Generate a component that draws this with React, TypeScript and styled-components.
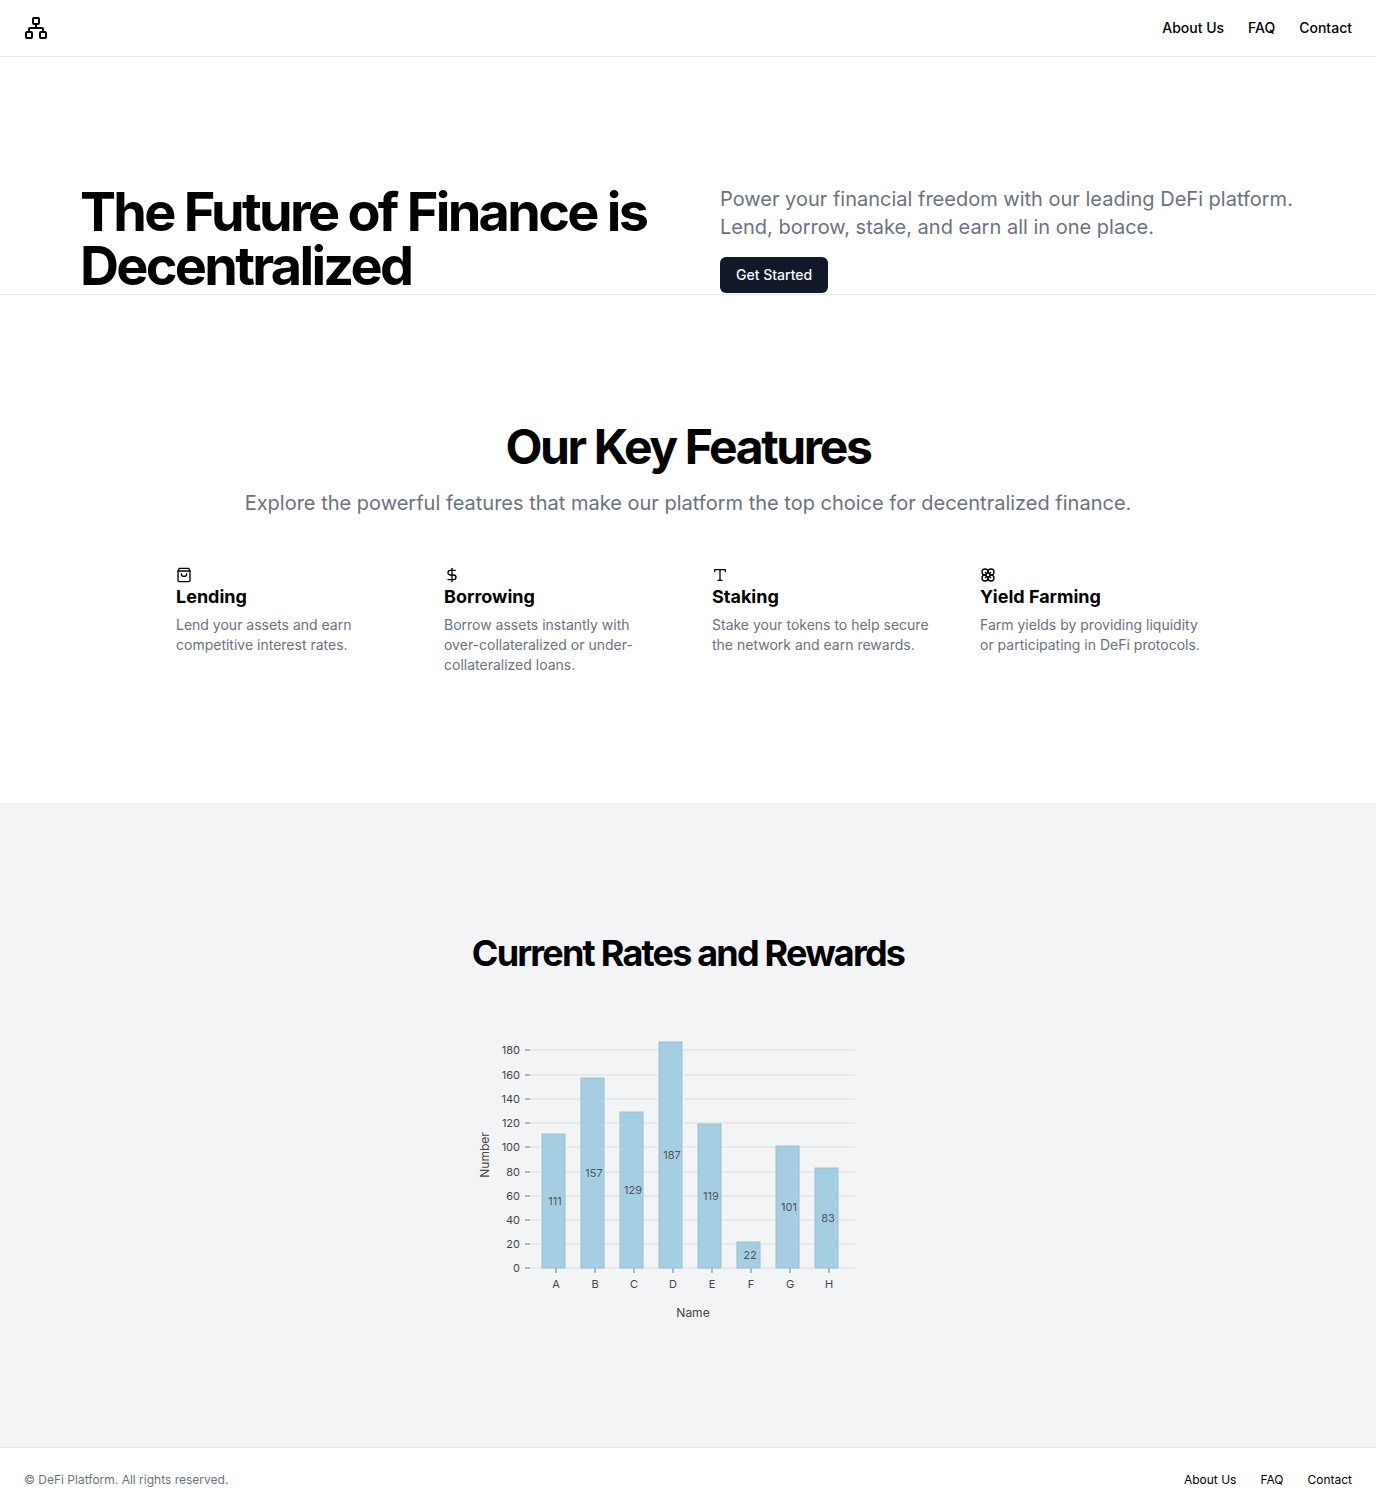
import React from "react";
import styled, { createGlobalStyle } from "styled-components";
import { DollarSign, Flower, Network, Type } from "lucide-react";

const GlobalStyle = createGlobalStyle`
  *, *::before, *::after { box-sizing: border-box; }
  body {
    margin: 0;
    background: #ffffff;
    color: #000000;
    font-family: Inter, "Liberation Sans", sans-serif;
    font-size: 16px;
    line-height: 24px;
  }
  h1, h2, h3, p, figure { margin: 0; }
`;

const Page = styled.div`
  display: flex;
  flex-direction: column;
  min-height: 100vh;
`;

const Header = styled.header`
  display: flex;
  align-items: center;
  justify-content: space-between;
  min-height: 57px;
  padding: 0 24px;
  border-bottom: 1px solid #e5e7eb;
`;

const Brand = styled.a`
  display: flex;
  color: inherit;
`;

const Nav = styled.nav`
  display: flex;
  gap: 24px;
`;

const NavLink = styled.a<{ $small?: boolean }>`
  color: inherit;
  text-decoration: none;
  font-size: ${(p) => (p.$small ? 12 : 14)}px;
  line-height: ${(p) => (p.$small ? 16 : 20)}px;
  font-weight: ${(p) => (p.$small ? 400 : 500)};

  &:hover {
    text-decoration: underline;
  }
`;

const Hero = styled.section`
  display: grid;
  grid-template-columns: 1fr 1fr;
  gap: 64px;
  padding: 128px 80px 1px;
  border-bottom: 1px solid #e5e7eb;

  @media (max-width: 900px) {
    grid-template-columns: 1fr;
    padding: 64px 24px;
  }
`;

const HeroTitle = styled.h1`
  font-size: 54px;
  line-height: 54px;
  font-weight: 700;
  letter-spacing: -0.05em;
`;

const HeroBody = styled.div`
  display: flex;
  flex-direction: column;
  align-items: flex-start;
  gap: 16px;
`;

const Lead = styled.p`
  color: #6b7280;
  font-size: 20px;
  line-height: 28px;
`;

const CtaButton = styled.button`
  height: 36px;
  padding: 0 16px;
  border: 0;
  border-radius: 6px;
  background: #111827;
  color: #f9fafb;
  font-family: inherit;
  font-size: 14px;
  line-height: 20px;
  font-weight: 500;
  cursor: pointer;
`;

const Section = styled.section<{ $shaded?: boolean }>`
  display: flex;
  flex-direction: column;
  align-items: center;
  gap: 48px;
  padding: 128px 24px;
  background: ${(p) => (p.$shaded ? "#f3f4f6" : "transparent")};
`;

const SectionIntro = styled.div`
  display: flex;
  flex-direction: column;
  gap: 16px;
  text-align: center;
`;

const SectionTitle = styled.h2<{ $small?: boolean }>`
  font-size: ${(p) => (p.$small ? 36 : 48)}px;
  line-height: ${(p) => (p.$small ? 45 : 48)}px;
  font-weight: 700;
  letter-spacing: -0.05em;
  text-align: center;
`;

const SectionText = styled(Lead)`
  line-height: 32px;
`;

const FeatureGrid = styled.div`
  display: grid;
  grid-template-columns: repeat(auto-fit, minmax(200px, 1fr));
  gap: 48px;
  width: 100%;
  max-width: 1024px;
`;

const Feature = styled.article`
  display: flex;
  flex-direction: column;
`;

const FeatureTitle = styled.h3`
  font-size: 18px;
  line-height: 28px;
  font-weight: 700;
`;

const FeatureText = styled.p`
  margin-top: 4px;
  color: #6b7280;
  font-size: 14px;
  line-height: 20px;
`;

const ChartFigure = styled.figure`
  width: 100%;
  max-width: 420px;

  svg {
    display: block;
    width: 100%;
    height: auto;
    overflow: visible;
  }
  text {
    fill: #444444;
    font-size: 11px;
  }
  text.legend {
    font-size: 12px;
  }
`;

const Footer = styled.footer`
  display: flex;
  align-items: center;
  justify-content: space-between;
  padding: 24px;
  border-top: 1px solid #e5e7eb;
`;

const Copyright = styled.p`
  color: #6b7280;
  font-size: 12px;
  line-height: 16px;
`;

function BagIcon() {
  return (
    <svg width="16" height="16" viewBox="0 0 24 24" fill="none" stroke="currentColor" strokeWidth="2" strokeLinecap="round" strokeLinejoin="round" aria-hidden="true">
      <path d="M5 2h14l2 4v14a2 2 0 0 1-2 2H5a2 2 0 0 1-2-2V6Z" />
      <path d="M3 6h18" />
      <path d="M16 10a4 4 0 0 1-8 0" />
    </svg>
  );
}

const links = ["About Us", "FAQ", "Contact"];

const features = [
  { icon: <BagIcon />, title: "Lending", text: "Lend your assets and earn competitive interest rates." },
  { icon: <DollarSign size={16} />, title: "Borrowing", text: "Borrow assets instantly with over-collateralized or under-collateralized loans." },
  { icon: <Type size={16} />, title: "Staking", text: "Stake your tokens to help secure the network and earn rewards." },
  { icon: <Flower size={16} />, title: "Yield Farming", text: "Farm yields by providing liquidity or participating in DeFi protocols." },
];

const rates = [
  { name: "A", value: 111 },
  { name: "B", value: 157 },
  { name: "C", value: 129 },
  { name: "D", value: 187 },
  { name: "E", value: 119 },
  { name: "F", value: 22 },
  { name: "G", value: 101 },
  { name: "H", value: 83 },
];

const gridValues = [0, 20, 40, 60, 80, 100, 120, 140, 160, 180];
const plot = { left: 52, right: 377, base: 244, firstTick: 78, step: 39, barWidth: 24 };
const toY = (value: number) => plot.base - Math.floor(value * 1.212);

function RatesChart() {
  return (
    <ChartFigure>
      <svg viewBox="0 0 420 295" role="img" aria-label="Number by name">
        {gridValues.map((v) => (
          <g key={v}>
            <line x1={plot.left} x2={plot.right} y1={toY(v)} y2={toY(v)} stroke="#dddddd" />
            <line x1={plot.left - 5} x2={plot.left} y1={toY(v)} y2={toY(v)} stroke="#777777" />
            <text x={plot.left - 10} y={toY(v)} textAnchor="end" dominantBaseline="central">{v}</text>
          </g>
        ))}
        {rates.map((r, i) => {
          const x = plot.firstTick + i * plot.step;
          const top = toY(r.value);
          const barX = x - 2 - plot.barWidth / 2;
          return (
            <g key={r.name}>
              <line x1={x} x2={x} y1={plot.base} y2={plot.base + 5} stroke="#777777" />
              <rect x={barX} y={top} width={plot.barWidth - 1} height={plot.base - top} fill="#a6cee3" stroke="#97bfd4" />
              <text x={x - 1} y={(top + plot.base) / 2} textAnchor="middle" dominantBaseline="central" fillOpacity="0.9">{r.value}</text>
              <text x={x} y={plot.base + 16} textAnchor="middle" dominantBaseline="central">{r.name}</text>
            </g>
          );
        })}
        <text className="legend" x="215" y="288" textAnchor="middle" dominantBaseline="central">Name</text>
        <text className="legend" transform="translate(6 131) rotate(-90)" textAnchor="middle" dominantBaseline="central">Number</text>
      </svg>
    </ChartFigure>
  );
}

export default function App() {
  return (
    <Page>
      <GlobalStyle />
      <Header>
        <Brand href="#" aria-label="DeFi Platform">
          <Network size={24} />
        </Brand>
        <Nav aria-label="Main">
          {links.map((l) => <NavLink key={l} href="#">{l}</NavLink>)}
        </Nav>
      </Header>
      <main>
        <Hero>
          <HeroTitle>The Future of Finance is Decentralized</HeroTitle>
          <HeroBody>
            <Lead>Power your financial freedom with our leading DeFi platform. Lend, borrow, stake, and earn all in one place.</Lead>
            <CtaButton type="button">Get Started</CtaButton>
          </HeroBody>
        </Hero>
        <Section>
          <SectionIntro>
            <SectionTitle>Our Key Features</SectionTitle>
            <SectionText>Explore the powerful features that make our platform the top choice for decentralized finance.</SectionText>
          </SectionIntro>
          <FeatureGrid>
            {features.map((f) => (
              <Feature key={f.title}>
                {f.icon}
                <FeatureTitle>{f.title}</FeatureTitle>
                <FeatureText>{f.text}</FeatureText>
              </Feature>
            ))}
          </FeatureGrid>
        </Section>
        <Section $shaded>
          <SectionTitle $small>Current Rates and Rewards</SectionTitle>
          <RatesChart />
        </Section>
      </main>
      <Footer>
        <Copyright>© DeFi Platform. All rights reserved.</Copyright>
        <Nav aria-label="Footer">
          {links.map((l) => <NavLink key={l} href="#" $small>{l}</NavLink>)}
        </Nav>
      </Footer>
    </Page>
  );
}
